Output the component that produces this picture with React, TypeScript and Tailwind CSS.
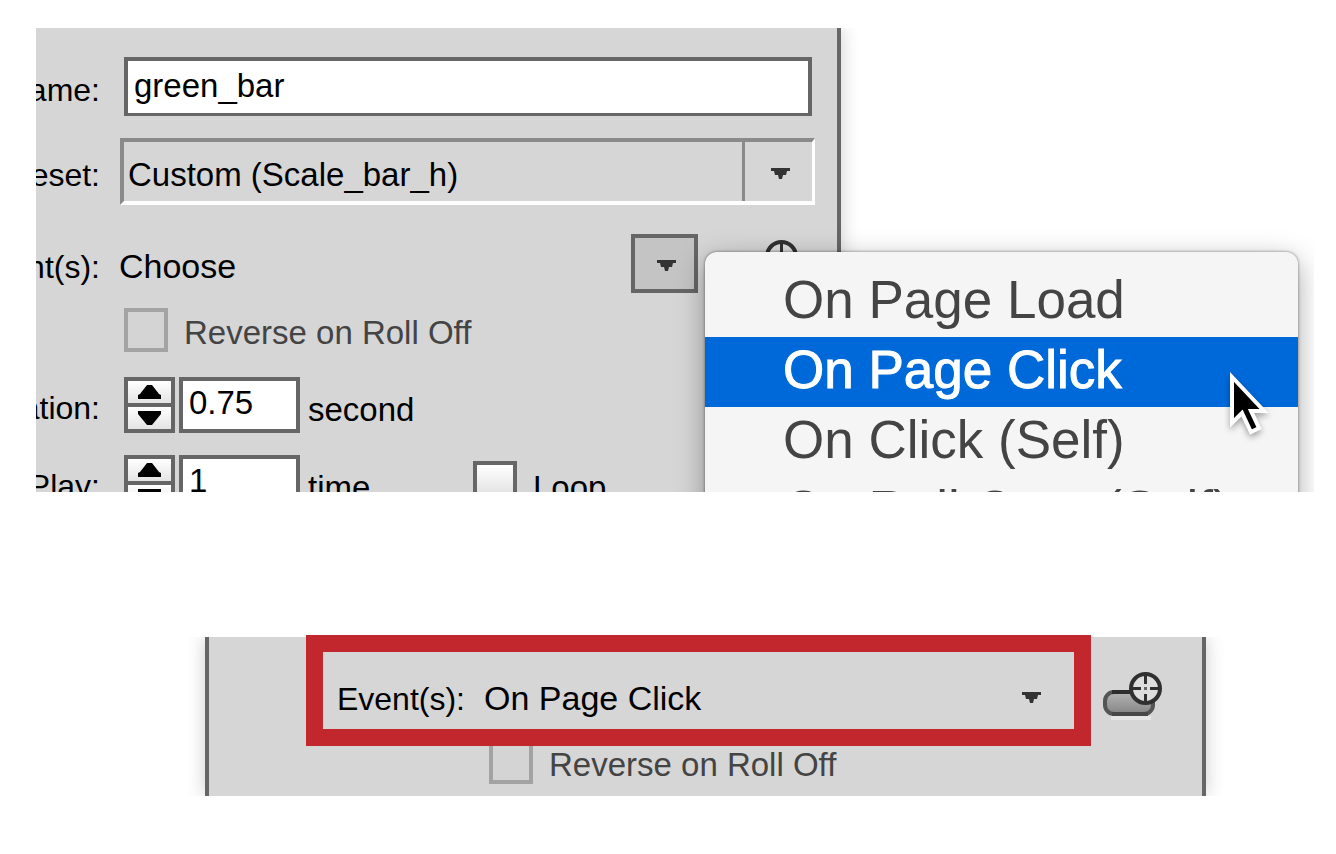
import type { ReactNode } from "react";

const menuItems = [
  "On Page Load",
  "On Page Click",
  "On Click (Self)",
  "On Roll Over (Self)",
];

export default function App() {
  return (
    <main className="bg-white pt-7 pb-14 font-['Liberation_Sans',Arial,sans-serif] text-[33px] leading-9 text-black">
      <section className="relative mr-[22px] ml-9 h-[464px] overflow-hidden">
        <div className="w-[805px] border-r-4 border-[#666] bg-[#d6d6d6] pt-[29px] pr-[22px] shadow-[0_0_18px_rgba(0,0,0,0.2)]">
          <Row label="Name:" id="name" labelWidth="w-16">
            <input
              id="name"
              defaultValue="green_bar"
              className="ml-1.5 h-[59px] min-w-0 flex-1 border-x-4 border-t-4 border-b-3 border-[#666] bg-white pr-2 pb-0.5 pl-1.5 outline-none"
            />
            <span className="w-[3px]" />
          </Row>

          <div className="mt-[22px]">
            <Row label="Preset:" id="preset" labelWidth="w-16">
              <div className="relative ml-0.5 flex flex-1 border-t-4 border-r-3 border-b-4 border-l-4 border-[#8a8a8a] border-r-white border-b-white">
                <select
                  id="preset"
                  className="h-[59px] w-full appearance-none bg-transparent pt-1.5 pl-1 leading-11 outline-none"
                >
                  <option>Custom (Scale_bar_h)</option>
                </select>
                <span className="pointer-events-none absolute inset-y-0 right-0 flex w-[70px] items-center justify-center border-l-3 border-[#8a8a8a]">
                  <ArrowDown />
                </span>
              </div>
            </Row>
          </div>

          <div className="mt-[29px] pr-[17px]">
            <Row label="Event(s):" id="event" labelWidth="w-16">
              <EventSelect id="event" value="Choose" boxed />
              <span className="ml-[41px]">
                <TriggerIcon />
              </span>
            </Row>
          </div>

          <div className="mt-[15px]">
            <ReverseOption id="reverse" indent="pl-[88px]" />
          </div>

          <div className="mt-[25px]">
            <Row label="Duration:" id="duration" labelWidth="w-16">
              <Spinner name="duration" />
              <NumberBox id="duration" value="0.75" />
              <span className="pt-2.5 pl-2">second</span>
            </Row>
          </div>

          <div className="mt-[22px]">
            <Row label="Play:" id="play" labelWidth="w-16">
              <Spinner name="play" />
              <NumberBox id="play" value="1" />
              <span className="w-[173px] pt-2.5 pl-2">time</span>
              <input
                id="loop"
                type="checkbox"
                className="size-11 appearance-none border-4 border-[#666] bg-linear-to-b from-white to-[#dcdcdc]"
              />
              <label htmlFor="loop" className="pt-2.5 pl-4">
                Loop
              </label>
            </Row>
          </div>
        </div>

        <div
          role="menu"
          className="absolute top-56 right-4 left-[669px] rounded-t-xl bg-[#f5f5f5] pt-[15px] shadow-[0_0_3px_rgba(0,0,0,0.5),0_8px_28px_rgba(0,0,0,0.35)]"
        >
          {menuItems.map((item, i) => (
            <button
              key={item}
              role="menuitem"
              className={
                i === 1
                  ? "block h-[70px] w-full bg-[#0069d9] pb-1 pl-[78px] text-left text-[53px] leading-[66px] whitespace-nowrap text-white [-webkit-text-stroke:1px_white]"
                  : "block h-[70px] w-full pb-1 pl-[78px] text-left text-[53px] leading-[66px] whitespace-nowrap text-[#444]"
              }
            >
              {item}
            </button>
          ))}
        </div>

        <Cursor />
      </section>

      <section className="relative mt-[145px] mr-28 ml-[187px]">
        <div className="overflow-hidden px-[18px]">
          <div className="h-[159px] border-x-4 border-[#666] bg-[#d6d6d6] pt-[29px] shadow-[0_0_18px_rgba(0,0,0,0.2)]">
            <div className="pr-10">
              <Row label="Event(s):" id="event-set" labelWidth="w-64">
                <EventSelect id="event-set" value="On Page Click" />
                <span className="ml-10">
                  <TriggerIcon />
                </span>
              </Row>
            </div>
            <div className="mt-[15px]">
              <ReverseOption id="reverse-set" indent="pl-[280px]" />
            </div>
          </div>
        </div>
        {/* callout frame around the event row */}
        <div className="pointer-events-none absolute -top-0.5 right-[133px] left-[119px] h-[111px] border-[17px] border-[#c1272d]" />
      </section>
    </main>
  );
}

function Row({
  label,
  id,
  labelWidth,
  children,
}: {
  label: string;
  id: string;
  labelWidth: string;
  children: ReactNode;
}) {
  return (
    <div className="flex items-center">
      <label
        htmlFor={id}
        className={`mr-[18px] flex shrink-0 justify-end overflow-hidden pt-1.5 text-[32px] whitespace-nowrap ${labelWidth}`}
      >
        {label}
      </label>
      {children}
    </div>
  );
}

function EventSelect({
  id,
  value,
  boxed,
}: {
  id: string;
  value: string;
  boxed?: boolean;
}) {
  return (
    <div className="relative flex flex-1">
      <select
        id={id}
        className="h-[59px] w-full appearance-none bg-transparent pt-1 pl-px text-[34px] leading-11 outline-none"
      >
        <option>{value}</option>
      </select>
      <span
        className={
          boxed
            ? "pointer-events-none absolute inset-y-0 right-0 flex w-[67px] items-center justify-center border-4 border-[#666] bg-[#c4c4c4]"
            : "pointer-events-none absolute inset-y-0 right-0 flex w-[67px] items-center justify-center"
        }
      >
        <ArrowDown />
      </span>
    </div>
  );
}

function ReverseOption({ id, indent }: { id: string; indent: string }) {
  return (
    <div className={`flex items-center text-[#444] ${indent}`}>
      <input
        id={id}
        type="checkbox"
        disabled
        className="size-11 appearance-none border-4 border-[#a3a3a3] bg-[#d4d4d4]"
      />
      <label htmlFor={id} className="pt-1.5 pl-4">
        Reverse on Roll Off
      </label>
    </div>
  );
}

function Spinner({ name }: { name: string }) {
  return (
    <div className="ml-1.5 flex h-14 w-[51px] flex-col border-4 border-[#666]">
      <button
        aria-label={`Increase ${name}`}
        className="flex flex-1 items-center justify-center border-b-4 border-[#666] bg-linear-to-b from-white to-[#e4e4e4]"
      >
        <svg width="23" height="14" viewBox="0 0 23 14">
          <path d="M9 0h5l7 9 2 1v4H0v-4l2-1z" />
        </svg>
      </button>
      <button
        aria-label={`Decrease ${name}`}
        className="flex flex-1 items-center justify-center bg-linear-to-b from-white to-[#e4e4e4]"
      >
        <svg width="23" height="14" viewBox="0 0 23 14">
          <path d="M0 0h23v3l-9 11H9L0 3z" />
        </svg>
      </button>
    </div>
  );
}

function NumberBox({ id, value }: { id: string; value: string }) {
  return (
    <input
      id={id}
      defaultValue={value}
      className="ml-1 h-14 w-[121px] border-4 border-[#666] bg-white pb-1 pl-1.5 outline-none"
    />
  );
}

function ArrowDown() {
  return (
    <svg
      className="mt-1 ml-1"
      width="19"
      height="11"
      viewBox="0 0 19 11"
      fill="#333"
    >
      <path d="M0 0h19v3h-3l-1 4h-3l-1 4H8L7 7H4L3 3H0z" />
    </svg>
  );
}

function TriggerIcon() {
  return (
    <svg width="59" height="48" viewBox="0 0 59 48" fill="none">
      <defs>
        <linearGradient id="pill" x1="0" y1="0" x2="0" y2="1">
          <stop offset="0" stopColor="#b4b4b4" />
          <stop offset="1" stopColor="#858585" />
        </linearGradient>
      </defs>
      <path d="M8 46h40" stroke="#e6e6e6" strokeWidth="4" />
      <rect
        x="2"
        y="20"
        width="48"
        height="22"
        rx="9"
        fill="url(#pill)"
        stroke="#555"
        strokeWidth="4"
      />
      <path d="M9 20h20" stroke="#2e2e2e" strokeWidth="4" />
      <path d="M9 42h36" stroke="#484848" strokeWidth="4" />
      <circle
        cx="42.5"
        cy="16.5"
        r="14.5"
        fill="#dedede"
        stroke="#303030"
        strokeWidth="4"
      />
      <path
        d="M42.5 4v8M42.5 22v8M30 16.5h8M47 16.5h8"
        stroke="#303030"
        strokeWidth="3"
      />
      <path d="M41 16.5h3" stroke="#666" strokeWidth="3" />
    </svg>
  );
}

function Cursor() {
  return (
    <svg
      className="absolute top-[343px] right-[45px] drop-shadow-[0_3px_3px_rgba(0,0,0,0.35)]"
      width="41"
      height="66"
      viewBox="0 0 41 66"
    >
      <path
        d="M4 6v46l10-10 9 19 8-4-8-17h13z"
        stroke="#fff"
        strokeWidth="4"
      />
    </svg>
  );
}
